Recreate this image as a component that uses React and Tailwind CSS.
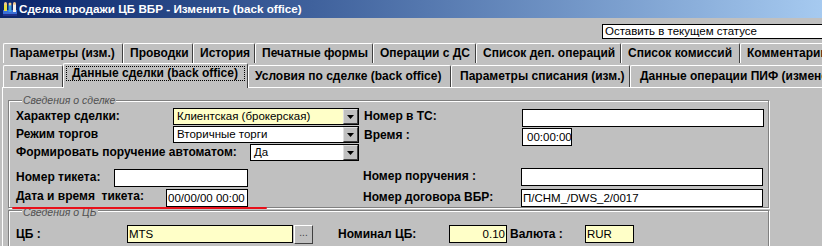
import React from "react";

function Arrow() {
  return (
    <div className="w-[15px] h-full shrink-0 bg-[#c0c0c0] border-t border-l border-t-[#dfdfdf] border-l-[#dfdfdf] border-r border-b border-r-[#404040] border-b-[#404040] flex items-center justify-center">
      <svg width="7" height="4" viewBox="0 0 7 4">
        <path d="M0 0h7L3.5 4z" fill="#000" />
      </svg>
    </div>
  );
}

function Combo({ className, value, yellow }) {
  return (
    <div className={`flex h-[17px] border border-black ${yellow ? "bg-[#ffffc8]" : "bg-white"} ${className}`}>
      <span className="flex-1 pl-[3px] text-[11.5px] leading-[15px] whitespace-nowrap overflow-hidden">{value}</span>
      <Arrow />
    </div>
  );
}

function Field({ className, value, yellow, right }) {
  return (
    <div
      className={`h-[18px] border border-black shrink-0 ${yellow ? "bg-[#ffffc8]" : "bg-white"} text-[11.5px] leading-[16px] whitespace-nowrap overflow-hidden ${right ? "text-right pr-[1px]" : "pl-[3px]"} ${className}`}
    >
      {value}
    </div>
  );
}

function Label({ className, children }) {
  return (
    <div className={`shrink-0 font-bold text-[12px] whitespace-pre leading-[17px] ${className}`}>{children}</div>
  );
}

function Tab({ className, children }) {
  return (
    <div
      className={`shrink-0 h-full border-t border-l border-white border-r border-r-[#404040] rounded-t-[2px] pl-[6px] font-bold text-[12px] leading-[18px] whitespace-nowrap overflow-hidden ${className}`}
    >
      {children}
    </div>
  );
}

function AppIcon() {
  return (
    <svg width="16" height="16" viewBox="0 0 16 16" className="shrink-0">
      <rect x="1" y="9" width="14" height="6" fill="#3a6fd8" />
      <rect x="2" y="3" width="3" height="7" fill="#e8e040" />
      <circle cx="3.5" cy="2.5" r="1.5" fill="#f0c890" />
      <rect x="6.5" y="4" width="3" height="7" fill="#40a0e0" />
      <circle cx="8" cy="3" r="1.5" fill="#f0c890" />
      <rect x="11" y="3" width="3" height="8" fill="#f0f0f0" />
      <circle cx="12.5" cy="2.5" r="1.5" fill="#f0c890" />
      <rect x="1" y="13" width="14" height="2" fill="#20308a" />
    </svg>
  );
}

export default function App() {
  return (
    <div className="relative w-[822px] h-[246px] overflow-hidden bg-[#c0c0c0] font-['Liberation_Sans',Arial,sans-serif] text-black">
      {/* title bar */}
      <div className="h-[18px] flex items-center pl-[2px] bg-linear-to-r from-[#0a246a] to-[#a6caf0]">
        <AppIcon />
        <span className="ml-[1px] text-white font-bold text-[11.7px] leading-[16px] whitespace-nowrap">
          Сделка продажи ЦБ ВБР - Изменить (back office)
        </span>
      </div>

      {/* toolbar */}
      <div className="h-[25px] flex">
        <div className="ml-[602px] mt-[6px] h-[15px] w-[240px] shrink-0 bg-white border border-black text-[11.5px] leading-[13px] pl-[2px] whitespace-nowrap">
          Оставить в текущем статусе
        </div>
      </div>

      {/* tabs row 1 */}
      <div className="h-[20px] flex pl-[3px]">
        <Tab className="w-[120px]">Параметры (изм.)</Tab>
        <Tab className="w-[70px]">Проводки</Tab>
        <Tab className="w-[62px]">История</Tab>
        <Tab className="w-[118px]">Печатные формы</Tab>
        <Tab className="w-[103px]">Операции с ДС</Tab>
        <Tab className="w-[145px]">Список деп. операций</Tab>
        <Tab className="w-[119px]">Список комиссий</Tab>
        <Tab className="w-[120px]">Комментарии</Tab>
      </div>

      {/* tabs row 2 */}
      <div className="h-[24px] flex items-end pl-[3px]">
        <Tab className="w-[60px] !h-[22px] leading-[20px]">Главная</Tab>
        <div className="relative z-10 shrink-0 w-[185px] h-[25px] -mb-[1px] bg-[#c0c0c0] border-t border-l border-white border-r border-r-[#404040] rounded-t-[2px] pt-[2px] pl-[2px]">
          <div className="w-[179px] h-[15px] border border-dotted border-black pl-[5px] font-bold text-[12px] leading-[13px] whitespace-nowrap">
            Данные сделки (back office)
          </div>
        </div>
        <Tab className="w-[203px] !h-[22px] leading-[20px]">Условия по сделке (back office)</Tab>
        <Tab className="w-[179px] !h-[22px] leading-[20px] !pl-[8px]">Параметры списания (изм.)</Tab>
        <Tab className="w-[220px] !h-[22px] leading-[20px] !pl-[9px]">Данные операции ПИФ (изменение)</Tab>
      </div>

      {/* panel */}
      <div className="ml-[2px] h-[200px] border-t border-l border-white">
        {/* group 1 */}
        <div className="relative ml-[5px] mt-[12px] w-[761px] h-[108px] border border-[#808080] shadow-[inset_1px_1px_0_#fff,1px_1px_0_#fff] pl-[7px] pt-[7px]">
          <div className="absolute left-[13px] top-[-7px] px-[1px] bg-[#c0c0c0] italic text-[10.5px] leading-[12px] text-[#505050] whitespace-nowrap">
            Сведения о сделке
          </div>

          <div className="flex items-start h-[18px]">
            <Label className="w-[157px]">Характер сделки:</Label>
            <Combo className="w-[186px]" value="Клиентская (брокерская)" yellow />
            <Label className="ml-[5px] w-[158px]">Номер в ТС:</Label>
            <Field className="w-[242px] mt-[1px]" value="" />
          </div>

          <div className="flex items-start h-[18px]">
            <Label className="w-[157px]">Режим торгов</Label>
            <Combo className="w-[186px]" value="Вторичные торги" />
            <Label className="ml-[5px] w-[158px] mt-[1px]">Время :</Label>
            <Field className="w-[50px] mt-[2px] !pl-[4px]" value="00:00:00" />
          </div>

          <div className="flex items-start h-[24px]">
            <Label className="w-[234px]">Формировать поручение автоматом:</Label>
            <Combo className="w-[109px]" value="Да" />
          </div>

          <div className="flex items-start h-[21px]">
            <Label className="w-[98px] mt-[1px]">Номер тикета:</Label>
            <Field className="w-[134px] mt-[1px]" value="" />
            <Label className="ml-[115px] w-[158px]">Номер поручения :</Label>
            <Field className="w-[242px]" value="" />
          </div>

          <div className="flex items-start h-[19px]">
            <Label className="w-[150px] -mt-[1px]">Дата и время  тикета:</Label>
            <Field className="w-[82px] !pl-[1px]" value="00/00/00 00:00" />
            <Label className="ml-[115px] w-[158px]">Номер договора ВБР:</Label>
            <Field className="w-[242px] !pl-[1px]" value="П/CHM_/DWS_2/0017" />
          </div>
        </div>

        {/* group 2 */}
        <div className="relative ml-[5px] mt-[2px] w-[761px] h-[60px] border border-[#808080] shadow-[inset_1px_1px_0_#fff,1px_1px_0_#fff] pl-[7px] pt-[14px]">
          <div className="absolute left-[13px] top-[-4px] px-[1px] bg-[#c0c0c0] italic text-[10.5px] leading-[11px] text-[#505050] whitespace-nowrap">
            Сведения о ЦБ
          </div>
          <div className="flex items-center h-[18px]">
            <Label className="w-[111px]">ЦБ :</Label>
            <Field className="w-[166px] !pl-[1px]" value="MTS" yellow />
            <div className="ml-[1px] w-[19px] h-[19px] shrink-0 bg-[#c0c0c0] border-t border-l border-white border-r border-b border-r-[#404040] border-b-[#404040] text-[10px] leading-[14px] text-center text-[#404040]">
              ...
            </div>
            <Label className="ml-[25px] w-[111px]">Номинал ЦБ:</Label>
            <Field className="w-[58px]" value="0.10" yellow right />
            <Label className="ml-[3px] w-[75px]">Валюта :</Label>
            <Field className="w-[49px] !pl-[1px]" value="RUR" yellow />
          </div>
        </div>
      </div>

      {/* red annotation line */}
      <div className="absolute left-[12px] top-[207px] w-[255px] h-[2px] bg-[#e8101a] rounded-full" />
    </div>
  );
}
